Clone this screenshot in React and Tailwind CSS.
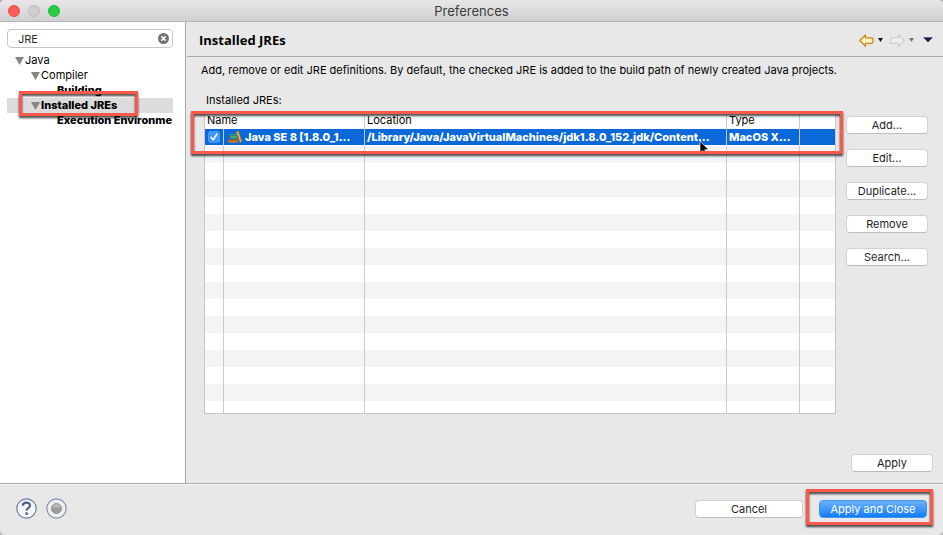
import React from "react";

const button =
  "block h-[18px] rounded-[4px] border border-[#d2d2d2] border-b-[#bcbcbc] bg-white text-center text-[11px] leading-4 text-[#1e1e1e]";

function Highlight({ className }) {
  return (
    <div
      aria-hidden="true"
      className={
        "pointer-events-none absolute z-10 border-[3px] border-[#fb5a4b] drop-shadow-[0px_2px_1px_rgba(0,0,0,0.75)] " +
        className
      }
    />
  );
}

function Disclosure() {
  return (
    <svg width="9" height="8" viewBox="0 0 9 8" className="shrink-0">
      <path d="M0 0h9L4.500 8z" fill="#868686" />
    </svg>
  );
}

function TitleBar() {
  return (
    <header className="relative flex h-[22px] shrink-0 items-center justify-center border-b border-[#b4b4b4] bg-linear-to-b from-[#e9e7e9] to-[#d1cfd1]">
      <div className="absolute left-2 flex gap-2">
        <button aria-label="Close" className="size-3 rounded-full border border-[#ee4c47] bg-[#fc5b57]" />
        <button aria-label="Minimize" className="size-3 rounded-full border border-[#bfbdbf] bg-[#cfcdcf]" />
        <button aria-label="Zoom" className="size-3 rounded-full border border-[#1fb83a] bg-[#28cc42]" />
      </div>
      <h1 className="pt-px text-[13px] leading-4 text-[#3c3c3c]">Preferences</h1>
    </header>
  );
}

function Sidebar() {
  return (
    <aside className="w-[186px] shrink-0 border-r border-[#a8a8a8] bg-white pt-[7px] pr-3 pl-[7px]">
      <div className="flex h-[19px] items-center rounded-[4px] border border-[#c6c6c6] pr-[3px] pl-2.5">
        <input
          aria-label="Filter preferences"
          defaultValue="JRE"
          className="min-w-0 flex-1 bg-transparent text-[11px] leading-4 text-[#2b2b2b] outline-none"
        />
        <button aria-label="Clear filter">
          <svg width="11" height="11" viewBox="0 0 11 11" className="block">
            <circle cx="5.500" cy="5.500" r="5.500" fill="#737373" />
            <path d="M3.400 3.400l4.200 4.200M7.600 3.400L3.400 7.600" stroke="#fff" strokeWidth="1.500" />
          </svg>
        </button>
      </div>
      <ul className="pt-[5px] text-[11px] leading-[15px] whitespace-nowrap text-black">
        <li className="flex h-[15px] items-center gap-px pl-2">
          <Disclosure />
          Java
        </li>
        <li className="flex h-[15px] items-center gap-px pl-6">
          <Disclosure />
          Compiler
        </li>
        <li className="h-[15px] pl-[50px] font-extrabold">Building</li>
        <li className="relative flex h-[15px] items-center gap-px bg-[#dcdcdc] pl-6 font-extrabold">
          <Disclosure />
          Installed JREs
          <Highlight className="-top-[7px] left-3 h-[25px] w-[119px]" />
        </li>
        <li className="h-[15px] pl-[50px] font-extrabold">Execution Environme</li>
      </ul>
    </aside>
  );
}

function HeaderNav() {
  return (
    <nav className="flex items-center" aria-label="History">
      <button aria-label="Back">
        <svg width="15" height="13" viewBox="0 0 15 13" className="block">
          <path d="M.8 6.500L6.500.9v3H12.500q1.500 0 1.500 1.500v2.400q0 1.500-1.500 1.500H6.500v3z" fill="#fff3b8" stroke="#c48a1c" strokeWidth="1.300" strokeLinejoin="round" />
        </svg>
      </button>
      <button aria-label="Back history" className="ml-1">
        <svg width="5" height="4" viewBox="0 0 5 4" className="block">
          <path d="M0 0h5L2.500 4z" fill="#111" />
        </svg>
      </button>
      <button aria-label="Forward" className="ml-[7px]">
        <svg width="15" height="13" viewBox="0 0 15 13" className="block">
          <path d="M14.200 6.500L8.500.9v3H1.500q-.9 0-.9.900v3.600q0 .9.900.9h7v3z" fill="#eee" stroke="#cecece" strokeWidth="1.200" strokeLinejoin="round" />
        </svg>
      </button>
      <button aria-label="Forward history" className="ml-1">
        <svg width="5" height="4" viewBox="0 0 5 4" className="block">
          <path d="M0 0h5L2.500 4z" fill="#777" />
        </svg>
      </button>
      <button aria-label="View menu" className="ml-[9px]">
        <svg width="10" height="6" viewBox="0 0 10 6" className="block">
          <path d="M.7.700h8.600L5 5z" fill="#222" stroke="#4d2396" strokeWidth=".8" />
        </svg>
      </button>
    </nav>
  );
}

function Books() {
  return (
    <svg width="16" height="14" viewBox="0 0 16 14" className="shrink-0">
      <path d="M2 3.500h8v1.800H2z" fill="#2f8f9a" />
      <path d="M1.500 5.500h8.700v3.300H2.500z" fill="#2d8b4c" />
      <path d="M3.500 7h6.500" stroke="#8fd09a" strokeWidth=".8" />
      <path d="M1 9.300h10v3.200H1z" fill="#b4602a" />
      <path d="M2 12h9" stroke="#d58f55" strokeWidth=".8" />
      <path d="M9.300 1.800L11.300 1 14.800 11.500l-1.800 1z" fill="#f3b234" stroke="#c07d17" strokeWidth=".6" />
    </svg>
  );
}

const line = "border-r border-r-[#cbcbcb]";
const head = "p-0 pl-0.5 align-top font-normal " + line;
const cell = "border-b border-b-white p-0 align-top " + line;

function JreTable() {
  return (
    <div className="relative min-w-0 flex-1 self-stretch">
      <div className="absolute inset-0 overflow-hidden border border-[#c6c6c6] bg-white">
        <table aria-labelledby="jre-label" className="w-full table-fixed border-separate border-spacing-0 text-left text-[11px] leading-4 whitespace-nowrap">
          <colgroup>
            <col className="w-[19px]" />
            <col className="w-[141px]" />
            <col />
            <col className="w-[73px]" />
            <col className="w-[35px]" />
          </colgroup>
          <thead>
            <tr className="h-4 leading-[14px]">
              <th colSpan={2} className={head}>Name</th>
              <th className={head}>Location</th>
              <th className={head}>Type</th>
              <th className="p-0" />
            </tr>
          </thead>
          <tbody>
            <tr className="h-[17px] bg-[#0a68d9] font-extrabold text-white">
              <td className={cell}>
                <label className="grid h-4 place-items-center">
                  <input type="checkbox" defaultChecked aria-label="Java SE 8" className="col-start-1 row-start-1 size-3 appearance-none rounded-[3px] bg-[#3f97fa]" />
                  <svg width="12" height="12" viewBox="0 0 12 12" className="pointer-events-none col-start-1 row-start-1">
                    <path d="M3 6.300l2.200 2.500L9 3" fill="none" stroke="#fff" strokeWidth="1.500" strokeLinecap="round" />
                  </svg>
                </label>
              </td>
              <td className={cell + " pl-[3px]"}>
                <div className="flex items-center gap-0.5">
                  <Books />
                  <span>Java SE 8 [1.8.0_1...</span>
                </div>
              </td>
              <td className={cell + " pl-0.5"}>/Library/Java/JavaVirtualMachines/jdk1.8.0_152.jdk/Content...</td>
              <td className={cell + " pl-0.5"}>MacOS X...</td>
              <td className="border-b border-b-white p-0" />
            </tr>
            {Array.from({ length: 60 }, (_, i) => (
              <tr key={i} className="h-[17px] odd:bg-white even:bg-[#f4f4f4]">
                <td className={"p-0 " + line} />
                <td className={"p-0 " + line} />
                <td className={"p-0 " + line} />
                <td className={"p-0 " + line} />
                <td className="p-0" />
              </tr>
            ))}
          </tbody>
        </table>
      </div>
      <svg width="10" height="16" viewBox="0 0 10 16" className="absolute top-7 right-[127px]">
        <path d="M1 1v12l2.700-2.500 2 4.500 2-.9-2-4.400H9.500z" fill="#000" stroke="#eee" strokeWidth=".7" />
      </svg>
      <Highlight className="-top-px -right-[7px] -left-[13px] h-[43px]" />
    </div>
  );
}

export default function App() {
  return (
    <div className="bg-[#b5b5b5] font-[Inter,'Liberation_Sans',sans-serif]">
      <div className="flex h-screen flex-col overflow-hidden rounded-[5px] bg-[#e8e8e8]">
        <TitleBar />
        <div className="flex min-h-0 flex-1">
          <Sidebar />
          <main className="flex min-w-0 flex-1 flex-col">
            <div className="ml-px flex h-[35px] shrink-0 items-center justify-between border-b border-[#a8a8a8] pt-0.5 pr-2.5 pl-3">
              <h2 className="font-['Open_Sans',sans-serif] text-[13px] leading-4 font-bold text-black">Installed JREs</h2>
              <HeaderNav />
            </div>
            <div className="flex min-h-0 flex-1 flex-col pr-2.5 pb-[11px] pl-[18px]">
              <p className="-ml-[3px] pt-[5px] text-[11px] leading-4 text-black">
                Add, remove or edit JRE definitions. By default, the checked JRE is added to the build path of newly created Java projects.
              </p>
              <div id="jre-label" className="pt-3.5 pl-0.5 text-[11px] leading-4 text-black">Installed JREs:</div>
              <div className="mt-1 flex min-h-0 flex-1 items-start gap-[10px] pr-[5px]">
                <JreTable />
                <div className="flex w-[82px] shrink-0 flex-col gap-[15px] pt-1">
                  <button className={button}>Add...</button>
                  <button className={button}>Edit...</button>
                  <button className={button}>Duplicate...</button>
                  <button className={button}>Remove</button>
                  <button className={button}>Search...</button>
                </div>
              </div>
              <div className="flex justify-end pt-10">
                <button className={button + " w-[82px]"}>Apply</button>
              </div>
            </div>
          </main>
        </div>
        <footer className="flex h-[52px] shrink-0 items-center border-t border-[#a8a8a8] px-4 pb-0.5 shadow-[inset_0_1px_0_#f8f8f8]">
          <div className="flex flex-1 gap-[9px]">
            <button aria-label="Help">
              <svg width="21" height="21" viewBox="0 0 21 21" className="block">
                <circle cx="10.500" cy="10.500" r="9.700" fill="#f3f5f8" stroke="#6b7f9f" strokeWidth="1.200" />
                <path d="M6.800 7.800C6.800 3.800 14 3.600 14 7.400c0 2.600-3.400 2.600-3.400 5.200" fill="none" stroke="#48628c" strokeWidth="2.200" />
                <circle cx="10.600" cy="15.700" r="1.400" fill="#48628c" />
              </svg>
            </button>
            <button aria-label="Record preferences">
              <svg width="21" height="21" viewBox="0 0 21 21" className="block">
                <circle cx="10.500" cy="10.500" r="9.700" fill="#eceef0" stroke="#8592ab" strokeWidth="1.200" />
                <circle cx="10.500" cy="10.500" r="5" fill="#9b9b9b" stroke="#878787" strokeWidth=".8" />
                <path d="M6.500 9.500a4 3.600 0 0 1 8 0z" fill="#bababa" />
              </svg>
            </button>
          </div>
          <button className={button + " w-[108px]"}>Cancel</button>
          <div className="relative ml-4">
            <button className="block h-[18px] w-[108px] rounded-[4px] border border-[#3f96f0] bg-linear-to-b from-[#68b1fa] to-[#0d7bfb] text-center text-[11px] leading-4 text-white">
              Apply and Close
            </button>
            <Highlight className="-top-[11px] -left-[13px] h-9 w-[127px]" />
          </div>
        </footer>
      </div>
    </div>
  );
}
